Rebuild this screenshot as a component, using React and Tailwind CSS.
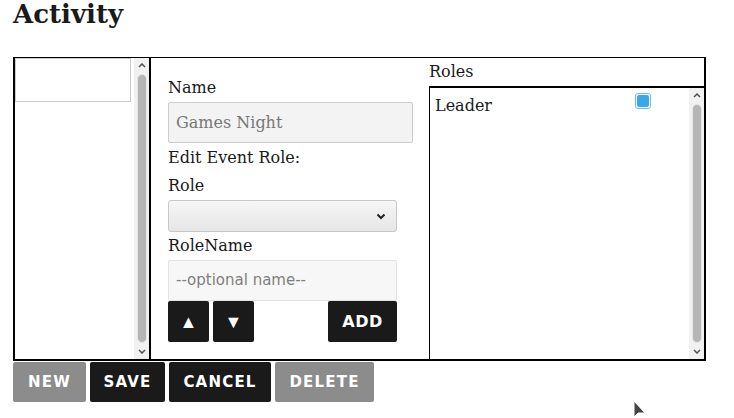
import React from 'react'

const serif = "font-['DejaVu_Serif',serif]"
const sans = "font-['DejaVu_Sans',sans-serif]"

// classic chrome-style scrollbar, drawn so it looks the same every run
const FakeScrollbar = () => (
  <div className="w-[15px] h-full bg-[#f1f1f1] flex flex-col items-center shrink-0">
    <div className="h-[15px] flex items-center justify-center">
      <svg width="8" height="5" viewBox="0 0 8 5">
        <path d="M1 4 L4 1 L7 4" fill="none" stroke="#505050" strokeWidth="1.5" />
      </svg>
    </div>
    <div className="flex-1 w-[10px] my-[1px] rounded-full bg-[#b5b5b5] border border-[#e6e6e6]" />
    <div className="h-[15px] flex items-center justify-center">
      <svg width="8" height="5" viewBox="0 0 8 5">
        <path d="M1 1 L4 4 L7 1" fill="none" stroke="#505050" strokeWidth="1.5" />
      </svg>
    </div>
  </div>
)

const Label = ({ children }) => (
  <div className={`${serif} text-[16px] leading-[24px] text-[#1a1a1a]`}>{children}</div>
)

const ActionButton = ({ children, dark, width }) => (
  <button
    className={`${sans} ${width} h-[40px] rounded-[2px] font-bold text-[15px] tracking-[1.2px] text-white ${
      dark ? 'bg-[#1a1a1a]' : 'bg-[#8c8c8c]'
    }`}
  >
    {children}
  </button>
)

export default function App() {
  return (
    <div className="relative w-[734px] h-[418px] bg-white overflow-hidden">
      <h1 className={`${serif} font-bold text-[26px] leading-[28px] ml-[13px] text-[#1a1a1a]`}>Activity</h1>

      <div className="ml-[13px] mt-[29px] w-[693px] h-[304px] flex border-t border-l-2 border-r-2 border-b-2 border-black">
        {/* list of activities */}
        <div className="w-[136px] flex border-r-2 border-black">
          <div className="flex-1">
            <div className="h-[44px] w-[116px] border border-[#cccccc] bg-white" />
          </div>
          <FakeScrollbar />
        </div>

        {/* edit form */}
        <div className="w-[278px] pl-[17px] pt-[18px]">
          <Label>Name</Label>
          <div className="mt-[2px] w-[245px] h-[41px] border border-[#cccccc] rounded-[2px] bg-[#f3f3f3] flex items-center px-[7px]">
            <span className={`${serif} text-[16px] text-[#777777]`}>Games Night</span>
          </div>
          <div className="mt-[3px]">
            <Label>Edit Event Role:</Label>
          </div>
          <div className="mt-[4px]">
            <Label>Role</Label>
          </div>
          <div className="mt-[2px] w-[229px] h-[32px] border border-[#c8c8c8] rounded-[3px] bg-gradient-to-b from-[#f6f6f6] to-[#e6e6e6] flex items-center justify-end pr-[10px]">
            <svg width="10" height="7" viewBox="0 0 10 7">
              <path d="M1.5 1.5 L5 5 L8.5 1.5" fill="none" stroke="#222" strokeWidth="2" />
            </svg>
          </div>
          <div className="mt-[2px]">
            <Label>RoleName</Label>
          </div>
          <div className="mt-[2px] w-[229px] h-[41px] border border-[#e2e2e2] rounded-[2px] bg-[#f7f7f7] flex items-center px-[7px]">
            <span className={`${sans} text-[15px] text-[#808080]`}>--optional name--</span>
          </div>
          <div className="w-[229px] flex items-start">
            <button className="w-[41px] h-[41px] rounded-[2px] bg-[#1a1a1a] text-white text-[18px] flex items-center justify-center">
              ▲
            </button>
            <button className="ml-[4px] w-[41px] h-[41px] rounded-[2px] bg-[#1a1a1a] text-white text-[18px] flex items-center justify-center">
              ▼
            </button>
            <button className={`${sans} ml-auto w-[69px] h-[41px] rounded-[2px] bg-[#1a1a1a] text-white font-bold text-[16px] tracking-[0.5px]`}>
              ADD
            </button>
          </div>
        </div>

        {/* roles */}
        <div className="flex-1 flex flex-col">
          <div className={`${serif} h-[28px] pt-[2px] text-[16px] leading-[24px] text-[#1a1a1a]`}>Roles</div>
          <div className="flex-1 flex border-t-2 border-l border-black">
            <div className="flex-1 pl-[5px] pt-[6px]">
              <div className="w-[216px] flex justify-between items-start">
                <span className={`${serif} text-[16px] leading-[24px] text-[#1a1a1a]`}>Leader</span>
                <span className="mt-[-1px] w-[16px] h-[16px] rounded-[3px] border border-[#6bbcec] bg-white p-[1px]">
                  <span className="block w-full h-full rounded-[2px] bg-[#3aa8e8]" />
                </span>
              </div>
            </div>
            <FakeScrollbar />
          </div>
        </div>
      </div>

      <div className="ml-[13px] mt-[1px] flex gap-[4px]">
        <ActionButton width="w-[73px]">NEW</ActionButton>
        <ActionButton dark width="w-[75px]">SAVE</ActionButton>
        <ActionButton dark width="w-[102px]">CANCEL</ActionButton>
        <ActionButton width="w-[99px]">DELETE</ActionButton>
      </div>

      {/* mouse pointer */}
      <svg className="absolute left-[633px] top-[400px]" width="14" height="20" viewBox="0 0 14 20">
        <path d="M1 1 L1 17 L5 13 L12 13 Z" fill="#444" stroke="#fff" strokeWidth="1" />
      </svg>
    </div>
  )
}
